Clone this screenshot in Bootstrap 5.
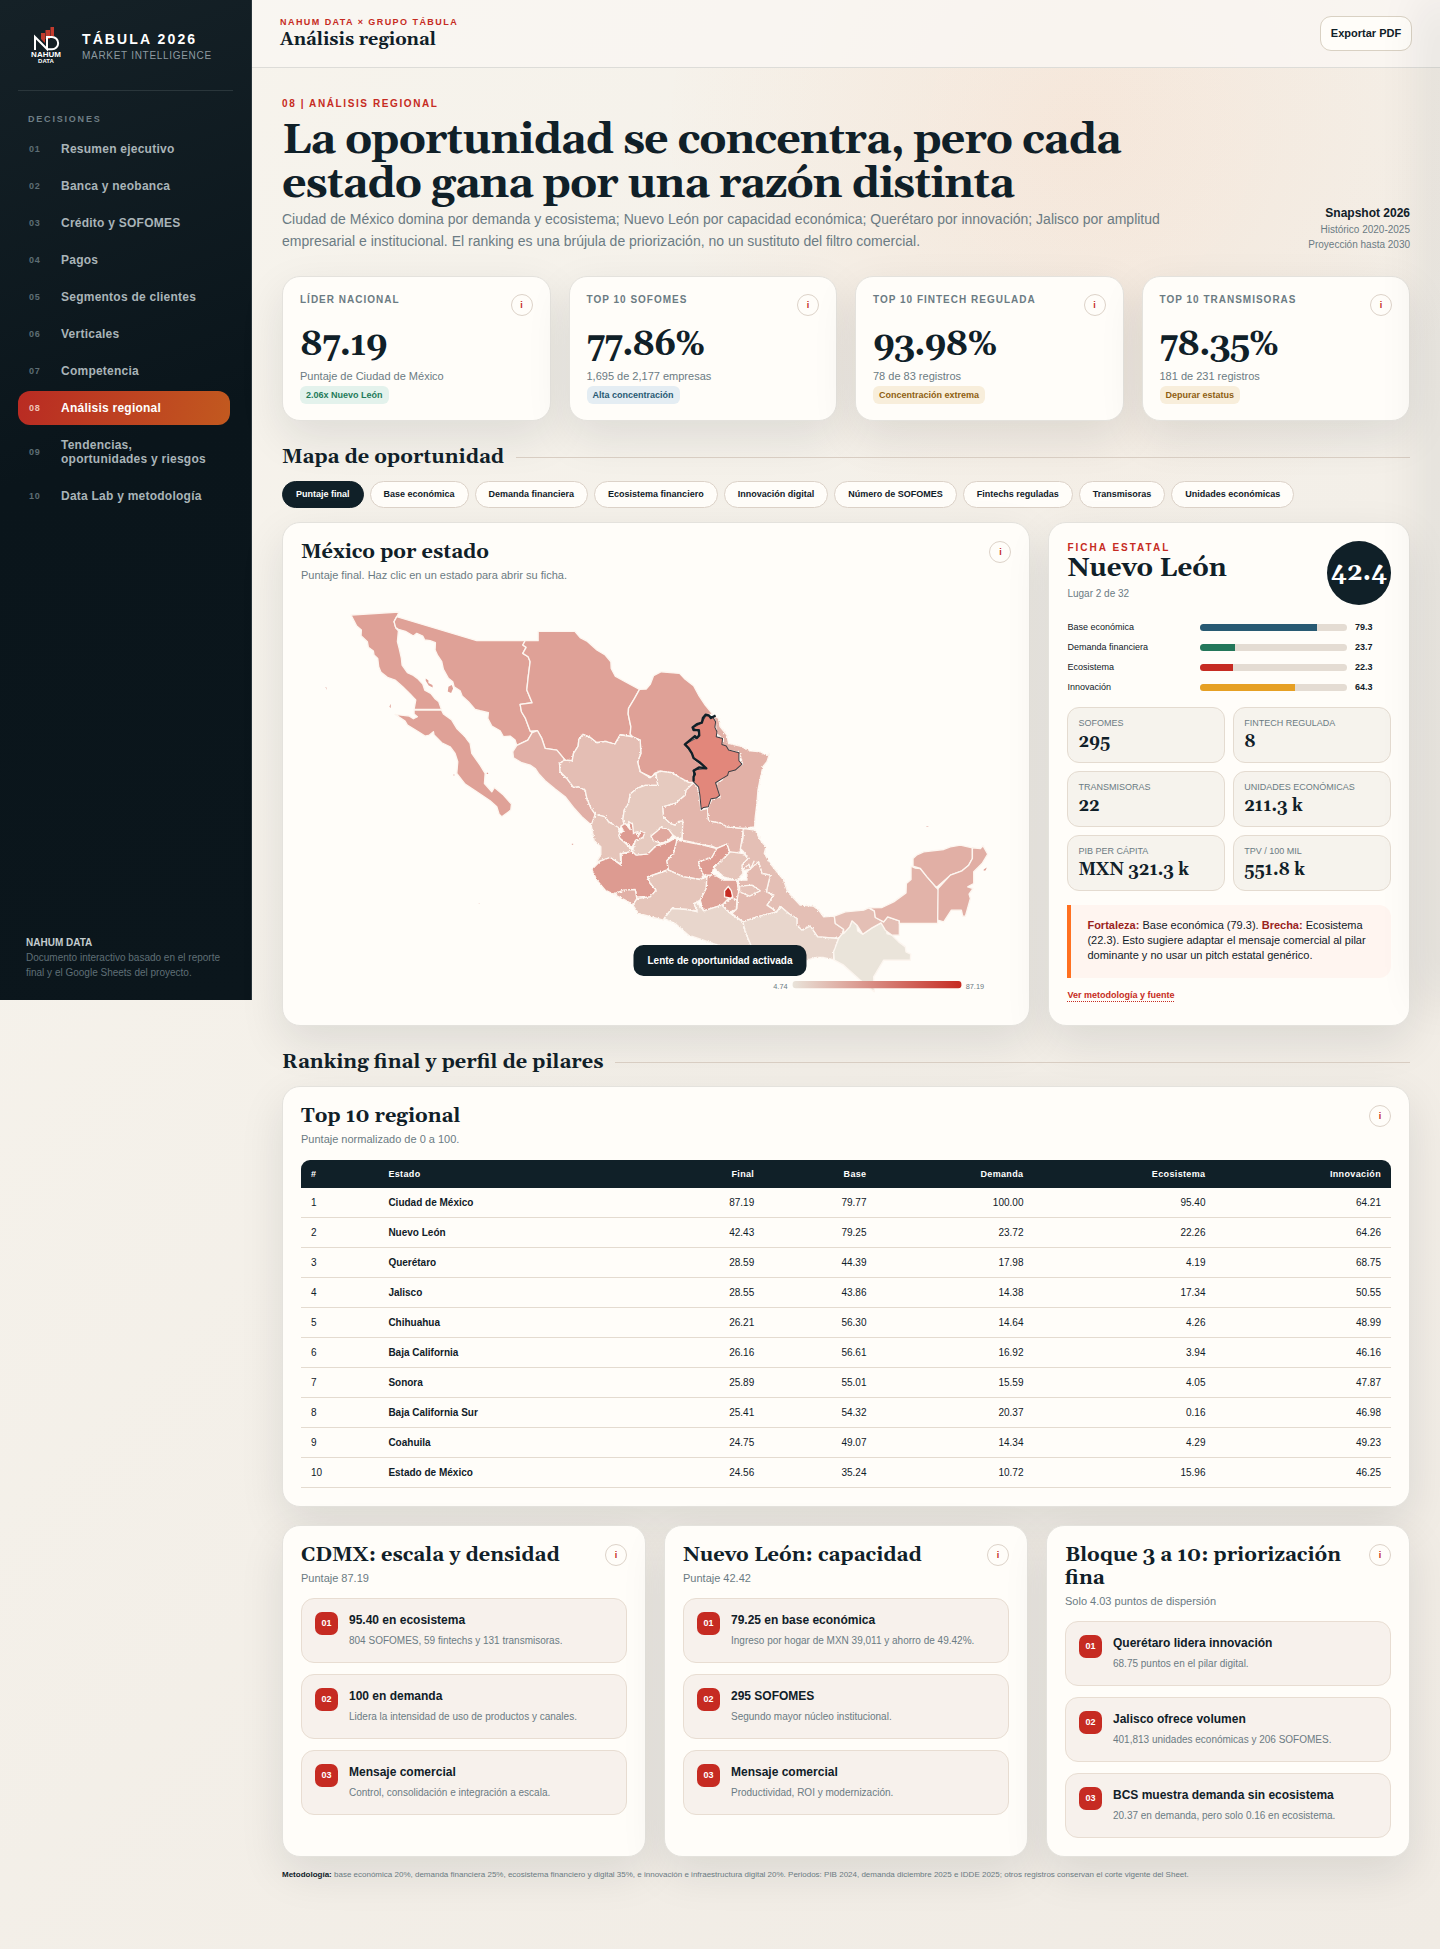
<!DOCTYPE html>
<html lang="es">
<head>
<meta charset="utf-8">
<meta name="viewport" content="width=device-width, initial-scale=1">
<title>Tábula 2026 · Análisis regional</title>
<link rel="stylesheet" href="https://cdn.jsdelivr.net/npm/bootstrap@5.3.0/dist/css/bootstrap.min.css">
<style>
:root{--ink:#102028;--muted:#6b7b83;--line:#dcd2c7;--red:#c62b22;--paper:#fffdf9;--serif:Georgia,Gelasio,"Liberation Serif",serif}
body{font-family:"Liberation Sans",Arial,sans-serif;color:var(--ink);font-size:11px;line-height:15px;position:relative;overflow-x:hidden;min-height:100vh;
background:radial-gradient(circle at 75% 130px,rgba(255,112,32,.08),transparent 420px),linear-gradient(135deg,#f7f4ed,#f0ebe4)}
h1,h2,h3,p{margin:0}
h1,h2,h3{font-family:var(--serif);font-weight:700;color:var(--ink)}
.side{width:252px;height:1000px;padding:18px 18px 20px;background:linear-gradient(160deg,#152127,#0a151b 45%,#0b161c);border-right:1px solid #2a363c;color:#fff}
.brand{height:73px;padding:0 14px 16px 10px;border-bottom:1px solid #2a363b;gap:14px}
.brand svg{width:40px;height:44px;flex:none}
.brand b{font-size:14px;line-height:18px;letter-spacing:.15em}
.brand span{font-size:10px;line-height:14px;letter-spacing:.07em;color:#8d9aa0;margin-top:1px}
.navlabel{margin:20px 10px 5px;font-size:9px;letter-spacing:.2em;font-weight:700;color:#6f7f86;line-height:16px}
.sidenav{gap:3px;padding-right:3px}
.sidenav a{display:grid;grid-template-columns:24px 1fr;gap:8px;align-items:center;padding:10px 11px;font-size:12px;line-height:14px;font-weight:700;color:#a9b4b8;text-decoration:none;border-radius:12px;letter-spacing:.02em}
.sidenav a small{font-size:9px;line-height:14px;color:#5d6d74;letter-spacing:.08em}
.sidenav a.active{background:linear-gradient(100deg,#b92b23,#c2591f);color:#fff}
.sidenav a.active small{color:#f0c4b8}
.sidefoot{padding:0 8px;font-size:10px;color:#5f6f76}
.sidefoot b{color:#c4ccce;line-height:14px}
.mainbar{height:68px;padding:0 28px 1px;background:rgba(249,246,242,.85);border-bottom:1px solid #dddcd8}
.eyebrow{color:var(--red);font-weight:700;font-size:9px;letter-spacing:.16em;line-height:14px;text-transform:uppercase}
.mainbar h2{font-size:18px;line-height:22px}
.export{font-size:11px;font-weight:700;line-height:15px;height:35px;width:92px;padding:0;border:1px solid #d9d1c3;border-radius:11px;background:var(--paper);color:var(--ink)}
.content{padding:29px 30px 68px}
.hero h1{font-size:43px;line-height:44px;letter-spacing:-1px;margin-top:8px}
.hero .eyebrow{font-size:10px}
.hero p{font-size:14px;line-height:22px;color:var(--muted);margin-top:1px}
.herotext{max-width:880px}
.snap{font-size:10px;color:var(--muted)}
.snap b{font-size:12px;line-height:18px;color:var(--ink)}
.panel{background:var(--paper);border:1px solid #e4e2dd;border-radius:18px;box-shadow:0 16px 44px rgba(16,32,40,.1);padding:18px;color:var(--ink)}
.g18{display:grid;gap:18px}
.kpis{grid-template-columns:repeat(4,1fr)}
.panel.kpi{padding:17px;height:145px}
.kpi .lab{font-size:10px;letter-spacing:.1em;font-weight:700;color:var(--muted);line-height:12px}
.kpi .num{font-family:var(--serif);font-weight:700;font-size:34px;line-height:40px;letter-spacing:-1px;margin-top:9px}
.kpi .txt{font-size:11px;line-height:14px;color:var(--muted);margin-top:4px}
.tagc{font-size:9px;line-height:12px;font-weight:700;padding:3px 6px;border-radius:6px;align-self:flex-start;margin-top:3px}
.info{width:22px;height:22px;border:1px solid #ddd3c9;border-radius:50%;background:var(--paper);color:var(--red);font-size:9px;font-weight:700;line-height:12px;padding:0;flex:none}
.sec{gap:12px;height:24px}
.sec h2{font-size:20px;line-height:24px}
.sec i{height:1px;background:#d8cdc2;flex:1}
.pill{font-size:9px;font-weight:700;line-height:13px;padding:6px 13px;border:1px solid #dcd2c8;border-radius:14px;background:var(--paper);color:var(--ink)}
.pill.on{background:var(--ink);border-color:var(--ink);color:#fff}
.panel h3{font-size:20px;line-height:23px}
.sub{font-size:11px;line-height:14px;color:var(--muted);margin-top:4px}
.maprow{grid-template-columns:2.07fr 1fr}
.mapa{display:block;width:100%;margin-top:8px}
.mapa text{font-size:22px;fill:#6b7b83}
.ficha h3{font-size:26px;line-height:28px}
.ficha .eyebrow{font-size:10px;letter-spacing:.2em}
.ficha .sub{font-size:10px}
.score{width:64px;height:64px;border-radius:50%;background:var(--ink);color:#fff;font:700 25px/64px var(--serif);text-align:center;flex:none}
.bars{display:grid;gap:5px;margin-top:15px}
.bars div{display:grid;grid-template-columns:125px 1fr 36px;gap:8px;align-items:center;font-size:9px;line-height:15px}
.bars .progress{display:block;height:7px;background:#e4dcd3;border-radius:4px}
.bars .progress-bar{height:7px}
.tiles{display:grid;grid-template-columns:1fr 1fr;gap:8px;margin-top:12px}
.tiles div{height:56px;border:1px solid #e4dbd0;border-radius:12px;background:#f6f3ed;padding:8px 10px;display:flex;flex-direction:column}
.tiles span{font-size:9px;line-height:14px;color:var(--muted);text-transform:uppercase}
.tiles b{font-family:var(--serif);font-size:17px;line-height:22px;margin-top:1px}
.callout{margin-top:14px;border-left:4px solid #ff7020;background:#fff5f0;border-radius:0 12px 12px 0;padding:13px 16px 15px;font-size:11px;line-height:15px}
.callout b{color:#9a241d}
.src{font-size:9px;font-weight:700;line-height:12px;color:var(--red);text-decoration:none;border-bottom:1px dotted var(--red);align-self:flex-start;margin-top:11px}
.rank{width:100%;font-size:10px;margin-top:14px;border-collapse:separate;border-spacing:0}
.rank th{background:var(--ink);color:#fff;height:28px;padding:0 10px;font-size:9px;letter-spacing:.04em}
.rank th:first-child{border-radius:9px 0 0 0}.rank th:last-child{border-radius:0 9px 0 0}
.rank td{height:30px;padding:0 10px;border-bottom:1px solid #e4dbd0}
.rank th:nth-child(n+3),.rank td:nth-child(n+3){text-align:right}
.insight{display:flex;gap:11px;border:1px solid #e8ddd2;border-radius:13px;background:#f7f1ec;padding:13px;height:65px}
.insight em{font-style:normal;width:23px;height:23px;border-radius:7px;background:var(--red);color:#fff;font-size:9px;font-weight:700;line-height:23px;text-align:center;flex:none}
.insight b{font-size:12px;line-height:16px}
.insight span{font-size:10px;line-height:14px;color:var(--muted);margin-top:6px}
.method{font-size:8px;line-height:12px;color:var(--muted)}
.method b{color:var(--ink)}
.toastnote{position:absolute;left:50%;top:945px;transform:translateX(-50%);background:var(--ink);color:#fff;font-size:10px;font-weight:700;line-height:15px;padding:8px 14px;border-radius:10px;white-space:nowrap}
.edge{position:absolute;right:0;top:0;width:80px;height:1080px;overflow:hidden;pointer-events:none}
.edge::after{content:"";position:absolute;left:100%;top:0;width:20px;height:1000px;box-shadow:-8px 0 50px rgba(16,32,40,.16)}
</style>
<script src="https://cdn.jsdelivr.net/npm/bootstrap@5.3.0/dist/js/bootstrap.bundle.min.js"></script>
</head>
<body>
<div class="d-flex align-items-start">
<aside class="side d-flex flex-column flex-shrink-0">
  <div class="brand d-flex align-items-center">
    <svg viewBox="0 0 40 44" aria-label="Nahum Data">
      <path fill="#c33b2e" d="M13 9h4v10l-4-4zM17.500 6H22v9h-4.500zM22.500 3H26v9h-3.500z"/>
      <path fill="none" stroke="#fff" stroke-width="2" d="M7 26V13l12 12V13h5a6 6 0 0 1 0 12.300h-4"/>
      <text x="18" y="33" font-size="8" font-weight="700" fill="#fff" text-anchor="middle">NAHUM</text>
      <text x="18" y="39" font-size="6" font-weight="700" fill="#fff" text-anchor="middle">DATA</text>
    </svg>
    <div class="d-flex flex-column"><b>TÁBULA 2026</b><span>MARKET INTELLIGENCE</span></div>
  </div>
  <div class="navlabel">DECISIONES</div>
  <nav class="sidenav d-flex flex-column">
    <a href="#"><small>01</small>Resumen ejecutivo</a>
    <a href="#"><small>02</small>Banca y neobanca</a>
    <a href="#"><small>03</small>Crédito y SOFOMES</a>
    <a href="#"><small>04</small>Pagos</a>
    <a href="#"><small>05</small>Segmentos de clientes</a>
    <a href="#"><small>06</small>Verticales</a>
    <a href="#"><small>07</small>Competencia</a>
    <a href="#" class="active" aria-current="page"><small>08</small>Análisis regional</a>
    <a href="#"><small>09</small>Tendencias, oportunidades y riesgos</a>
    <a href="#"><small>10</small>Data Lab y metodología</a>
  </nav>
  <div class="sidefoot mt-auto d-flex flex-column"><b>NAHUM DATA</b>Documento interactivo basado en el reporte final y el Google Sheets del proyecto.</div>
</aside>

<main class="flex-grow-1" style="min-width:0">
  <header class="mainbar d-flex align-items-center justify-content-between">
    <div><div class="eyebrow">Nahum Data × Grupo Tábula</div><h2>Análisis regional</h2></div>
    <button class="export" type="button">Exportar PDF</button>
  </header>
  <div class="content">
    <section class="hero d-flex justify-content-between align-items-end">
      <div class="herotext">
        <div class="eyebrow">08 | Análisis regional</div>
        <h1>La oportunidad se concentra, pero cada estado gana por una razón distinta</h1>
        <p>Ciudad de México domina por demanda y ecosistema; Nuevo León por capacidad económica; Querétaro por innovación; Jalisco por amplitud empresarial e institucional. El ranking es una brújula de priorización, no un sustituto del filtro comercial.</p>
      </div>
      <div class="snap text-end d-flex flex-column"><b>Snapshot 2026</b><span>Histórico 2020-2025</span><span>Proyección hasta 2030</span></div>
    </section>

    <section class="g18 kpis mt-4">
      <div class="panel kpi d-flex flex-column"><div class="d-flex justify-content-between"><span class="lab">LÍDER NACIONAL</span><button class="info" type="button">i</button></div><div class="num">87.19</div><div class="txt">Puntaje de Ciudad de México</div><span class="tagc" style="background:#e3f2ec;color:#1f7a5a">2.06x Nuevo León</span></div>
      <div class="panel kpi d-flex flex-column"><div class="d-flex justify-content-between"><span class="lab">TOP 10 SOFOMES</span><button class="info" type="button">i</button></div><div class="num">77.86%</div><div class="txt">1,695 de 2,177 empresas</div><span class="tagc" style="background:#e4edf3;color:#285a73">Alta concentración</span></div>
      <div class="panel kpi d-flex flex-column"><div class="d-flex justify-content-between"><span class="lab">TOP 10 FINTECH REGULADA</span><button class="info" type="button">i</button></div><div class="num">93.98%</div><div class="txt">78 de 83 registros</div><span class="tagc" style="background:#f8eedb;color:#8f5e12">Concentración extrema</span></div>
      <div class="panel kpi d-flex flex-column"><div class="d-flex justify-content-between"><span class="lab">TOP 10 TRANSMISORAS</span><button class="info" type="button">i</button></div><div class="num">78.35%</div><div class="txt">181 de 231 registros</div><span class="tagc" style="background:#f8eedb;color:#8f5e12">Depurar estatus</span></div>
    </section>

    <div class="sec d-flex align-items-center mt-4"><h2>Mapa de oportunidad</h2><i></i></div>
    <div class="d-flex flex-wrap mt-2 pt-1" style="gap:6px">
      <button class="pill on" type="button">Puntaje final</button><button class="pill" type="button">Base económica</button><button class="pill" type="button">Demanda financiera</button><button class="pill" type="button">Ecosistema financiero</button><button class="pill" type="button">Innovación digital</button><button class="pill" type="button">Número de SOFOMES</button><button class="pill" type="button">Fintechs reguladas</button><button class="pill" type="button">Transmisoras</button><button class="pill" type="button">Unidades económicas</button>
    </div>

    <section class="g18 maprow" style="margin-top:14px">
      <div class="panel">
        <div class="d-flex justify-content-between"><div><h3>México por estado</h3><div class="sub">Puntaje final. Haz clic en un estado para abrir su ficha.</div></div><button class="info" type="button">i</button></div>
        <svg class="mapa" viewBox="3 0 2130 1251" role="img" aria-label="Mapa de México por estado">
          <defs>
            <linearGradient id="lg"><stop offset="0" stop-color="#e9e3d9"/><stop offset="1" stop-color="#c62b22"/></linearGradient>
            <filter id="rough" x="-2%" y="-2%" width="104%" height="104%"><feTurbulence type="fractalNoise" baseFrequency=".18" numOctaves="2" seed="4"/><feDisplacementMap in="SourceGraphic" scale="8" xChannelSelector="R" yChannelSelector="G"/></filter>
          </defs>
          <g stroke="#fdf6f0" stroke-width="4" stroke-linejoin="round">
            <g fill="#dfa197">
              <path d="M153 75L297 66 290 80 282 95 287 113 295 122 292 155 298 178 304 205 306 225 322 248 340 256 352 265 368 282 374 300 392 310 404 325 416 335 424 358H342L347 330 330 312 308 290 285 270 262 262 243 247 236 230 233 205 222 195 220 183 205 172 202 155 183 137 184 120 170 108Z"/>
              <path d="M342 360H424L430 372 455 390 470 415 490 435 510 460 515 490 540 525 555 550 553 580 575 605 583 592 610 615 634 642 632 660 605 680 597 672 590 650 570 632 530 605 495 582 470 550 473 515 465 490 450 470 425 458 402 435 400 425 388 435 375 438 355 425 322 405 315 393 285 373 328 378 340 386 352 380 342 372Z"/>
              <path d="M290 80L530 152H675L668 165 678 172 668 190 684 200 690 215 684 262 680 300 696 338 660 343 664 365 676 385 690 423 696 428 683 450 650 466 645 450 630 438 610 440 600 422 575 408 563 385 565 368 540 362 525 358 505 335 486 318 480 302 462 290 458 275 445 265 430 238 425 215 412 195 405 180 406 158 390 152 374 150 368 138 350 130 340 138 316 124 295 118 287 113 282 95Z"/>
              <path d="M675 152H714V124H824L840 143 860 153 890 180 915 195 932 215 933 235 945 258 975 275 1018 298 1003 325 985 355 984 372 992 410 990 432 997 440 960 434 944 462 915 454 890 458 870 442 848 433 836 448 834 468 820 490 816 512 795 510 770 480 735 475 725 445 712 422 690 423 676 385 664 365 660 343 696 338 680 300 684 262 690 215 684 200 668 190 678 172 668 165Z"/>
              <path d="M1018 298L1038 297 1050 283 1060 257 1083 245 1138 250 1152 265 1180 287 1195 315 1215 345 1237 372 1217 374 1205 398 1178 413 1196 425 1192 442 1154 463 1175 490 1183 508 1218 535 1180 540 1180 577 1165 577 1140 563 1115 548 1080 543 1063 550 1055 562 1020 545 1012 515 1022 490 1020 450 997 440 990 432 992 410 984 372 985 355 1003 325Z"/>
            </g>
            <path fill="#e1afa6" d="M650 466L683 450 696 428 712 422 725 445 735 475 770 480 795 510 778 520 780 545 800 565 820 592 835 590 855 600 860 625 873 655 885 672 880 702 868 700 845 680 820 652 795 620 765 597 735 572 715 550 705 535 690 525 665 518 640 503 638 485Z"/>
            <g filter="url(#rough)">
            <path fill="#e4beb4" d="M848 433L870 442 890 458 915 454 944 462 960 434 997 440 1020 450 1022 490 1012 515 1020 545 1050 563 1067 550 1073 586 1035 586 1010 595 990 612 985 640 972 660 968 688 972 705 955 715 925 695 915 680 885 672 873 655 860 625 855 600 835 590 820 592 800 565 780 545 778 520 795 510 816 512 820 490 834 468 836 448Z"/>
            <path fill="#e6cabf" d="M1067 550L1080 543 1115 548 1140 563 1165 577 1180 578 1158 600 1155 615 1125 640 1088 650 1090 680 1110 700 1125 705 1135 694 1148 692 1146 745 1130 742 1118 735 1065 770 1042 792 1008 797 997 785 1005 752 1028 742 1030 728 1000 730 990 700 972 705 968 688 972 660 985 640 990 612 1010 595 1035 586 1073 586Z"/>
            <path fill="#e5c4b9" d="M885 672L915 680 925 695 955 712 960 745 985 768 997 785 960 790 962 822 930 803 900 812 888 816 902 795 902 770 882 752 873 705Z"/>
            <path fill="#dd9b91" d="M875 838L900 813 930 802 963 825 963 792 995 783 1008 795 1042 792 1065 770 1105 755 1128 742 1130 765 1120 790 1100 812 1105 838 1042 860 1050 880 1068 900 1050 920 1010 925 1005 900 970 902 940 912 915 900 890 870Z"/>
            <path fill="#dd9b91" d="M955 735L970 722 962 708 975 700 990 718 985 694 997 702 1000 730 1010 724 1014 740 1022 722 1034 728 1028 742 1005 752 995 772 985 765 960 745Z"/>
            <path fill="#e0a89e" d="M1052 738L1072 722 1080 712 1105 718 1118 735 1110 745 1085 760 1060 752Z"/>
            <path fill="#e3b6ac" d="M1180 578L1192 590 1198 620 1202 660 1222 655 1225 692 1260 698 1280 710 1330 715 1325 745 1320 785 1300 790 1288 785 1280 762 1250 775 1235 768 1200 763 1185 758 1146 750 1146 740 1148 692 1135 694 1125 705 1110 700 1090 680 1088 650 1125 640 1155 615 1158 600Z"/>
            <path fill="#e2b1a7" d="M1237 374L1255 385 1260 410 1280 435 1285 460 1320 468 1350 482 1380 485 1400 496 1408 490 1400 515 1388 530 1380 565 1373 600 1370 640 1365 680 1363 710 1330 715 1280 710 1260 698 1225 692 1222 655 1235 628 1260 620 1250 600 1246 578 1265 570 1280 545 1327 522 1317 488 1285 480 1265 465 1267 445 1248 430 1245 395Z"/>
            <path fill="#e4bfb5" d="M1330 715L1365 720 1380 750 1397 770 1392 790 1410 820 1450 870 1462 905 1500 945 1540 948 1555 960 1570 980 1602 978 1605 1000 1630 1017 1625 1032 1615 1045 1552 1040 1530 1008 1505 1020 1490 1005 1490 985 1465 970 1440 948 1430 965 1400 945 1420 915 1398 905 1410 855 1385 850 1375 815 1360 835 1325 842 1325 825 1343 805 1330 785 1320 775 1328 745Z"/>
            <path fill="#e3bab0" d="M1315 870L1340 870 1340 845 1375 815 1385 850 1410 855 1398 905 1420 915 1400 945 1430 965 1370 980 1328 995 1295 970 1310 955 1312 905Z"/>
            <path fill="#e5c5ba" d="M1270 805L1290 785 1330 790 1343 805 1325 825 1328 850 1310 870 1295 868 1270 860 1240 832Z"/>
            <path fill="none" d="M1324 842L1346 822 1350 838 1362 812"/>
            <path fill="#e1ada3" d="M1130 750L1200 763 1250 775 1235 802 1195 815 1210 855 1200 868 1150 860 1105 840 1100 812 1120 790Z"/>
            <path fill="#de9c92" d="M1195 815L1235 802 1250 775 1280 762 1288 785 1270 805 1240 832 1235 855 1210 855 1198 830Z"/>
            <path fill="#e5c5ba" d="M1042 860L1105 840 1150 860 1200 868 1220 860 1218 895 1200 930 1180 940 1192 962 1160 958 1115 955 1092 985 1090 990 1015 970 998 945 1010 925 1050 920 1068 900 1050 880Z"/>
            <path fill="#e1b0a6" d="M940 912L970 900 1005 898 1010 925 998 943 975 930Z"/>
            <path fill="#dea398" d="M1220 860L1240 852 1270 870 1310 870 1315 905 1310 930 1290 920 1265 945 1210 962 1200 930 1218 895Z"/>
            <path fill="#e1b5aa" d="M1265 945L1295 922 1310 932 1308 958 1290 965 1267 955Z"/>
            <path fill="#e5c2b8" d="M1318 888L1355 885 1380 902 1348 918 1318 905Z"/>
            <path fill="#e8d6cc" d="M1092 985L1115 955 1160 958 1192 965 1182 942 1190 936 1210 962 1265 945 1290 970 1328 995 1335 1025 1352 1065 1352 1095 1245 1062 1165 1035 1125 1000Z"/>
            <path fill="#e8d6cc" d="M1328 995L1370 980 1430 965 1440 948 1465 970 1490 985 1490 1005 1505 1020 1530 1008 1552 1040 1615 1045 1600 1085 1600 1108 1570 1102 1545 1102 1520 1110 1480 1125 1420 1110 1352 1090 1352 1065 1335 1025Z"/>
            </g>
            <path fill="#eae4da" d="M1615 1045L1625 1032 1648 1010 1655 992 1670 1005 1672 1022 1687 1032 1715 1013 1742 998 1757 1010 1760 1030 1775 1035 1795 1055 1815 1070 1817 1085 1831 1092 1830 1110H1750L1720 1160 1722 1205 1705 1190 1680 1170 1630 1125 1602 1110 1600 1085Z"/>
            <path fill="#e4bfb5" d="M1602 978L1635 965 1690 960 1705 953 1722 962 1725 982 1750 995 1762 980 1797 992V1035H1775L1755 1020 1742 998 1715 1013 1687 1032 1670 1005 1655 992 1648 1010 1630 1030 1630 1017 1605 1000Z"/>
            <path fill="#e2b3a9" d="M1705 953L1745 952 1780 935 1817 908 1818 880 1832 868V828L1845 834 1860 835 1880 860 1908 892 1915 900 1912 1000H1797V992L1762 980 1750 995 1725 982 1722 962Z"/>
            <path fill="#e1afa5" d="M1838 828V805L1850 794 1870 785 1930 778 1950 770 1980 765 2016 773V805L2005 825 1985 842 1950 855 1908 892 1880 860 1860 835Z"/>
            <path fill="#e1aea4" d="M2016 773L2040 775 2048 767 2062 792 2045 820 2020 845V880L2002 890 2018 895 2006 912 2010 925 1995 978H1987L1983 960H1953L1930 995 1912 990 1913 895 1950 855 1985 842 2005 825 2016 805Z"/>
          </g>
          <path fill="#dfa197" d="M377 265l8 6 0 8 12 6 1 7-12-6-9-14zM445 290l10-5 4 10-6 14-10-5zM76 290l3 2 1 8zM268 350l4-9v13zM480 432l14 10 6 10-10-4zM2050 838l9-6-3 8-6 2zM1878 708h6v2h-6zM815 761h4v3h-4zM536 939h2v2h-2zM460 553h3v3h-3zM484 582l6 6zM560 548h4v4h-4z"/>
          <path fill="#e2877b" stroke="#3d3e44" stroke-width="3" stroke-linejoin="round" d="M1237 380L1217 376 1205 398 1178 413 1196 425 1192 442 1154 463 1175 490 1183 508 1218 535 1180 540 1180 575 1195 590 1199 615 1203 658 1210 652 1224 650 1232 626 1248 624 1258 616 1252 598 1246 578 1262 568 1282 556 1285 545 1305 540 1325 522 1316 512V488L1285 480 1278 468 1265 463 1267 445 1248 440 1250 425 1244 412 1246 395Z"/>
          <path fill="none" stroke="#102028" stroke-width="7" stroke-linejoin="round" d="M1246 376L1232 384 1226 376 1216 374 1208 384 1205 398 1190 402 1177 412 1180 420 1196 420 1197 436 1190 444 1184 438 1154 463 1165 474 1175 490 1180 504 1200 518 1218 535 1196 532 1180 542 1184 552 1180 560V574"/>
          <path fill="#c62b22" stroke="#fdf6f0" stroke-width="4" d="M1284 889l9 12 4 18-6 5-18-4 0-18z"/>
          <rect x="1477" y="1172" width="506" height="22" rx="9" fill="url(#lg)"/>
          <text x="1419" y="1196">4.74</text><text x="1996" y="1196">87.19</text>
        </svg>
      </div>

      <div class="panel ficha d-flex flex-column">
        <div class="d-flex justify-content-between">
          <div><div class="eyebrow">Ficha estatal</div><h3>Nuevo León</h3><div class="sub">Lugar 2 de 32</div></div>
          <div class="score">42.4</div>
        </div>
        <div class="bars">
          <div>Base económica<span class="progress"><span class="progress-bar" style="width:79.3%;background:#285a73"></span></span><b>79.3</b></div>
          <div>Demanda financiera<span class="progress"><span class="progress-bar" style="width:23.7%;background:#23775a"></span></span><b>23.7</b></div>
          <div>Ecosistema<span class="progress"><span class="progress-bar" style="width:22.3%;background:#c62b22"></span></span><b>22.3</b></div>
          <div>Innovación<span class="progress"><span class="progress-bar" style="width:64.3%;background:#e6a024"></span></span><b>64.3</b></div>
        </div>
        <div class="tiles">
          <div><span>SOFOMES</span><b>295</b></div><div><span>Fintech regulada</span><b>8</b></div>
          <div><span>Transmisoras</span><b>22</b></div><div><span>Unidades económicas</span><b>211.3 k</b></div>
          <div><span>PIB per cápita</span><b>MXN 321.3 k</b></div><div><span>TPV / 100 mil</span><b>551.8 k</b></div>
        </div>
        <div class="callout"><b>Fortaleza:</b> Base económica (79.3). <b>Brecha:</b> Ecosistema (22.3). Esto sugiere adaptar el mensaje comercial al pilar dominante y no usar un pitch estatal genérico.</div>
        <a class="src" href="#">Ver metodología y fuente</a>
      </div>
    </section>

    <div class="sec d-flex align-items-center mt-4"><h2>Ranking final y perfil de pilares</h2><i></i></div>
    <section class="panel" style="margin-top:12px">
      <div class="d-flex justify-content-between"><div><h3>Top 10 regional</h3><div class="sub">Puntaje normalizado de 0 a 100.</div></div><button class="info" type="button">i</button></div>
      <table class="rank">
        <colgroup><col style="width:7.1%"><col style="width:27.1%"><col style="width:8.3%"><col style="width:10.3%"><col style="width:14.4%"><col style="width:16.7%"><col style="width:16.1%"></colgroup>
        <thead><tr><th>#</th><th>Estado</th><th>Final</th><th>Base</th><th>Demanda</th><th>Ecosistema</th><th>Innovación</th></tr></thead>
        <tbody>
          <tr><td>1</td><td><b>Ciudad de México</b></td><td>87.19</td><td>79.77</td><td>100.00</td><td>95.40</td><td>64.21</td></tr>
          <tr><td>2</td><td><b>Nuevo León</b></td><td>42.43</td><td>79.25</td><td>23.72</td><td>22.26</td><td>64.26</td></tr>
          <tr><td>3</td><td><b>Querétaro</b></td><td>28.59</td><td>44.39</td><td>17.98</td><td>4.19</td><td>68.75</td></tr>
          <tr><td>4</td><td><b>Jalisco</b></td><td>28.55</td><td>43.86</td><td>14.38</td><td>17.34</td><td>50.55</td></tr>
          <tr><td>5</td><td><b>Chihuahua</b></td><td>26.21</td><td>56.30</td><td>14.64</td><td>4.26</td><td>48.99</td></tr>
          <tr><td>6</td><td><b>Baja California</b></td><td>26.16</td><td>56.61</td><td>16.92</td><td>3.94</td><td>46.16</td></tr>
          <tr><td>7</td><td><b>Sonora</b></td><td>25.89</td><td>55.01</td><td>15.59</td><td>4.05</td><td>47.87</td></tr>
          <tr><td>8</td><td><b>Baja California Sur</b></td><td>25.41</td><td>54.32</td><td>20.37</td><td>0.16</td><td>46.98</td></tr>
          <tr><td>9</td><td><b>Coahuila</b></td><td>24.75</td><td>49.07</td><td>14.34</td><td>4.29</td><td>49.23</td></tr>
          <tr><td>10</td><td><b>Estado de México</b></td><td>24.56</td><td>35.24</td><td>10.72</td><td>15.96</td><td>46.25</td></tr>
        </tbody>
      </table>
    </section>

    <section class="g18" style="grid-template-columns:repeat(3,1fr);margin-top:18px">
      <div class="panel">
        <div class="d-flex justify-content-between"><div><h3>CDMX: escala y densidad</h3><div class="sub">Puntaje 87.19</div></div><button class="info" type="button">i</button></div>
        <div class="d-grid" style="gap:11px;margin-top:13px">
          <div class="insight"><em>01</em><div class="d-flex flex-column"><b>95.40 en ecosistema</b><span>804 SOFOMES, 59 fintechs y 131 transmisoras.</span></div></div>
          <div class="insight"><em>02</em><div class="d-flex flex-column"><b>100 en demanda</b><span>Lidera la intensidad de uso de productos y canales.</span></div></div>
          <div class="insight"><em>03</em><div class="d-flex flex-column"><b>Mensaje comercial</b><span>Control, consolidación e integración a escala.</span></div></div>
        </div>
      </div>
      <div class="panel">
        <div class="d-flex justify-content-between"><div><h3>Nuevo León: capacidad</h3><div class="sub">Puntaje 42.42</div></div><button class="info" type="button">i</button></div>
        <div class="d-grid" style="gap:11px;margin-top:13px">
          <div class="insight"><em>01</em><div class="d-flex flex-column"><b>79.25 en base económica</b><span>Ingreso por hogar de MXN 39,011 y ahorro de 49.42%.</span></div></div>
          <div class="insight"><em>02</em><div class="d-flex flex-column"><b>295 SOFOMES</b><span>Segundo mayor núcleo institucional.</span></div></div>
          <div class="insight"><em>03</em><div class="d-flex flex-column"><b>Mensaje comercial</b><span>Productividad, ROI y modernización.</span></div></div>
        </div>
      </div>
      <div class="panel">
        <div class="d-flex justify-content-between"><div><h3>Bloque 3 a 10: priorización fina</h3><div class="sub">Solo 4.03 puntos de dispersión</div></div><button class="info" type="button">i</button></div>
        <div class="d-grid" style="gap:11px;margin-top:13px">
          <div class="insight"><em>01</em><div class="d-flex flex-column"><b>Querétaro lidera innovación</b><span>68.75 puntos en el pilar digital.</span></div></div>
          <div class="insight"><em>02</em><div class="d-flex flex-column"><b>Jalisco ofrece volumen</b><span>401,813 unidades económicas y 206 SOFOMES.</span></div></div>
          <div class="insight"><em>03</em><div class="d-flex flex-column"><b>BCS muestra demanda sin ecosistema</b><span>20.37 en demanda, pero solo 0.16 en ecosistema.</span></div></div>
        </div>
      </div>
    </section>
    <p class="method mt-2 pt-1"><b>Metodología:</b> base económica 20%, demanda financiera 25%, ecosistema financiero y digital 35%, e innovación e infraestructura digital 20%. Periodos: PIB 2024, demanda diciembre 2025 e IDDE 2025; otros registros conservan el corte vigente del Sheet.</p>
  </div>
</main>
</div>
<div class="toastnote" role="status">Lente de oportunidad activada</div>
<div class="edge"></div>
</body>
</html>
